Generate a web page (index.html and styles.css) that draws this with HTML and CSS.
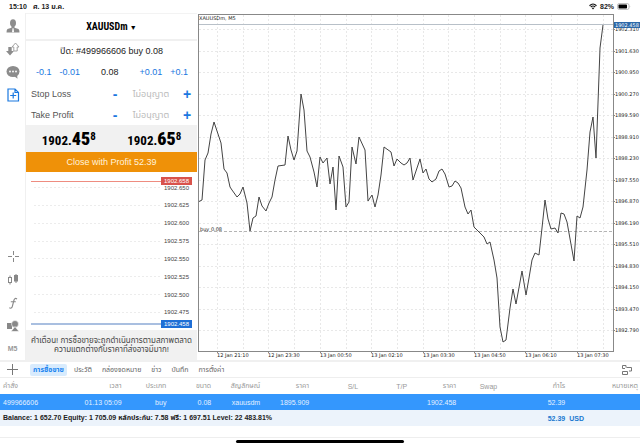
FILE: index.html
```html
<!DOCTYPE html>
<html lang="th">
<head>
  <meta charset="UTF-8" />
  <meta name="viewport" content="width=device-width, initial-scale=1" />
  <title>XAUUSDm, M5</title>
  <link rel="stylesheet" href="styles.css">
</head>
<body>

  <header class="status-bar">
    <span>15:10</span>
    <span>ศ. 13 ม.ค.</span>
    <span class="status-right">
      <svg width="8" height="7" viewBox="0 0 16 13"><path d="M1 5Q8-2 15 5M3.500 7.500Q8 3.500 12.500 7.500" fill="none" stroke="#111" stroke-width="2.200"/><path d="M5.500 9.500Q8 7.500 10.500 9.500L8 12.500z" fill="#111"/></svg>
      82%
      <svg width="14" height="7" viewBox="0 0 28 14"><rect x="1" y="1" width="23" height="12" rx="3.500" fill="none" stroke="#999" stroke-width="1.200"/><rect x="3" y="3" width="17" height="8" rx="1.500"/><path d="M25.500 5v4q2-2 0-4" fill="#999"/></svg>
    </span>
  </header>

  <main class="workspace">
    <nav class="sidebar">
      <div class="tools">
        <button aria-label="Accounts"><svg width="14" height="14" viewBox="0 0 14 14" fill="#8c8c8c"><ellipse cx="7" cy="4" rx="3" ry="3.800"/><path d="M5.500 6.500h3v2.200l4 1.300q1 .5 1 3.500H.5q0-3 1-3.500l4-1.300z"/><path d="M6.500 9.300h1l.5 4H6z" fill="#fff"/></svg></button>
        <button aria-label="Quotes"><svg width="14" height="14" viewBox="0 0 14 14"><path d="M2.300 5h3.400v4H8l-4 4.500L0 9h2.300z" fill="#8c8c8c"/><path d="M9.500 1l3.500 4h-1.800v4H7.800V5H6z" fill="#fff" stroke="#999" stroke-width=".9"/></svg></button>
        <button aria-label="Messages"><svg width="14" height="14" viewBox="0 0 14 14"><ellipse cx="7" cy="6.500" rx="6.500" ry="5.500" fill="#8c8c8c"/><path d="M8 11l3.500 2.800-.5-4z" fill="#8c8c8c"/><g fill="#fff"><circle cx="4" cy="6.500" r=".9"/><circle cx="7" cy="6.500" r=".9"/><circle cx="10" cy="6.500" r=".9"/></g></svg></button>
        <button aria-label="New order"><svg width="14" height="14" viewBox="0 0 14 14" fill="none" stroke="#1a78e0" stroke-width="1.200"><path d="M2 1h7l3.500 3.500V13H2zM9 1v3.500h3.500M7.200 4.500v6M4.200 7.500h6"/></svg></button>
      </div>
      <div class="tools">
        <button aria-label="Crosshair"><svg width="14" height="14" viewBox="0 0 14 14" stroke="#888" stroke-width="1"><path d="M7.500 1v4M7.500 8v4M2 6.500h4M9 6.500h4"/></svg></button>
        <button aria-label="Chart type"><svg width="14" height="14" viewBox="0 0 14 14" stroke="#888" stroke-width="1"><path d="M4 2.500v9M10 1v9"/><rect x="2.500" y="4.500" width="3" height="5" fill="#fff"/><rect x="8.500" y="2.500" width="3" height="5.500" fill="#888"/></svg></button>
        <button aria-label="Indicators"><svg width="14" height="14" viewBox="0 0 14 14" fill="none" stroke="#888" stroke-width="1.100"><path d="M11 3Q8.800 1.300 8 4L6.300 10.500Q5.500 13 3.300 11.800M4.800 5.800h5"/></svg></button>
        <button aria-label="Objects"><svg width="14" height="14" viewBox="0 0 14 14" fill="#888"><path d="M1 4h5v6H1z"/><circle cx="9" cy="5" r="3.500" stroke="#fff" stroke-width=".6"/><path d="M9 7.500L13 12.500H5z" stroke="#fff" stroke-width=".6"/></svg></button>
        <button class="period">M5</button>
      </div>
    </nav>

    <section class="order">
      <button class="symbol">XAUUSDm <small>▼</small></button>
      <p class="order-title">ปิด: #499966606 buy 0.08</p>
      <div class="volume">
        <button>-0.1</button>
        <button>-0.01</button>
        <input type="text" value="0.08" aria-label="Volume" />
        <button>+0.01</button>
        <button>+0.1</button>
      </div>
      <div class="level">
        <label for="sl">Stop Loss</label>
        <button aria-label="Decrease stop loss">-</button>
        <input type="text" id="sl" placeholder="ไม่อนุญาต" />
        <button aria-label="Increase stop loss">+</button>
      </div>
      <div class="level">
        <label for="tp">Take Profit</label>
        <button aria-label="Decrease take profit">-</button>
        <input type="text" id="tp" placeholder="ไม่อนุญาต" />
        <button aria-label="Increase take profit">+</button>
      </div>
      <div class="prices">
        <span class="price">1902.<b>45</b><sup>8</sup></span>
        <span class="price">1902.<b>65</b><sup>8</sup></span>
      </div>
      <button class="close-btn">Close with Profit 52.39</button>
      <svg class="ticks" viewBox="0 0 171 158">
        <path class="tick-grid" d="M8 15.500H135M8 33.500H135M8 51.500H135M8 69.500H135M8 86.500H135M8 104.500H135M8 122.500H135M8 140.500H135"/>
        <g class="tick-labels">
          <text x="163" y="18">1902.650</text>
          <text x="163" y="35">1902.625</text>
          <text x="163" y="53">1902.600</text>
          <text x="163" y="71">1902.575</text>
          <text x="163" y="89">1902.550</text>
          <text x="163" y="107">1902.525</text>
          <text x="163" y="125">1902.500</text>
          <text x="163" y="142">1902.475</text>
        </g>
        <path d="M5 9.500H136" stroke="#ee8c80"/>
        <rect x="135" y="5" width="31" height="8" fill="#d9534c"/>
        <path d="M5 152H136" stroke="#a9bfe0" stroke-width="2"/>
        <rect x="135" y="148" width="31" height="8" fill="#1f6fd6"/>
        <g class="tick-labels badge">
          <text x="163" y="11">1902.658</text>
          <text x="163" y="154">1902.458</text>
        </g>
      </svg>
      <p class="notice">คำเตือน! การซื้อขายจะถูกดำเนินการตามสภาพตลาด<br>ความแตกต่างกับราคาที่ส่งอาจมีมาก!</p>
    </section>

    <section class="chart">
      <svg id="chart" viewBox="198 13 442 347"></svg>
    </section>
  </main>

  <nav class="tabs">
    <button class="add" aria-label="Add"><svg width="11" height="11" viewBox="0 0 11 11" stroke="#777"><path d="M5.500 0v11M0 5.500h11"/></svg></button>
    <button class="tab active">การซื้อขาย</button>
    <button class="tab">ประวัติ</button>
    <button class="tab">กล่องจดหมาย</button>
    <button class="tab">ข่าว</button>
    <button class="tab">บันทึก</button>
    <button class="tab">การตั้งค่า</button>
    <button class="layout" aria-label="Layout"><svg width="12" height="12" viewBox="0 0 12 12" fill="none" stroke="#777"><path d="M5 3.500V1.500H1.500V4.500H4M5.500 3.500h5v3.500H8M1.500 7.500h5v3h-5z"/></svg></button>
  </nav>

  <table class="positions">
    <colgroup>
      <col class="c-order"><col class="c-time"><col class="c-type"><col class="c-size"><col class="c-price"><col class="c-price"><col class="c-price"><col class="c-price"><col class="c-price"><col class="c-swap"><col class="c-profit"><col>
    </colgroup>
    <thead>
      <tr><th>คำสั่ง</th><th>เวลา</th><th>ประเภท</th><th>ขนาด</th><th>สัญลักษณ์</th><th>ราคา</th><th>S/L</th><th>T/P</th><th>ราคา</th><th>Swap</th><th>กำไร</th><th>หมายเหตุ</th></tr>
    </thead>
    <tbody>
      <tr><td>499966606</td><td>01.13 05:09</td><td>buy</td><td>0.08</td><td>xauusdm</td><td>1895.909</td><td></td><td></td><td>1902.458</td><td></td><td>52.39</td><td></td></tr>
    </tbody>
    <tfoot>
      <tr><td colspan="10">Balance: 1 652.70 Equity: 1 705.09 หลักประกัน: 7.58 ฟรี: 1 697.51 Level: 22 483.81%</td><td class="total">52.39</td><td class="total currency">USD</td></tr>
    </tfoot>
  </table>

  <footer class="home"><div class="home-bar"></div></footer>

  <script src="chart.js"></script>
</body>
</html>
```
FILE: styles.css
```css
* {
  box-sizing: border-box;
}
body {
  margin: 0;
  min-height: 100vh;
  display: flex;
  flex-direction: column;
  background: #fff;
  color: #222;
  font-family: "Liberation Sans", Arial, "Noto Sans Thai", sans-serif;
  font-size: 7px;
}
button,
input {
  border: none;
  background: none;
  padding: 0;
  margin: 0;
  font: inherit;
  color: inherit;
}
button {
  cursor: pointer;
}
p {
  margin: 0;
}
svg {
  display: block;
}

.status-bar {
  display: flex;
  gap: 6px;
  height: 13px;
  padding: 0 9px;
  line-height: 13px;
  font-weight: bold;
}
.status-right {
  display: flex;
  align-items: center;
  gap: 3px;
  margin-left: auto;
}

.workspace {
  display: flex;
  align-items: stretch;
}
.sidebar {
  flex: 0 0 26px;
  display: flex;
  flex-direction: column;
  justify-content: space-between;
  padding-top: 1px;
  border-right: 1px solid #f0f0f0;
}
.tools {
  display: flex;
  flex-direction: column;
}
.tools button {
  display: flex;
  align-items: center;
  justify-content: center;
  height: 23px;
}
.tools .period {
  font-weight: bold;
  color: #999;
}

/* order panel */
.order {
  flex: 0 0 28%;
  min-width: 0;
  margin-right: 1px;
  max-width: 171px;
  display: flex;
  flex-direction: column;
  font-size: 9px;
}
.symbol {
  height: 28px;
  border-top: 1px solid #f3f3f3;
  border-bottom: 2px solid #f0f0f0;
  font-family: "Liberation Sans Narrow", "Roboto Condensed", "Liberation Sans", sans-serif;
  font-size: 10px;
  font-weight: bold;
  color: #000;
}
.symbol small {
  font-size: 7px;
}
.order-title {
  line-height: 20px;
  text-align: center;
}
.volume {
  display: flex;
  align-items: center;
  gap: 8px;
  height: 22px;
  padding: 0 9px 0 10px;
}
.volume input {
  flex: 1;
  width: 0;
  min-width: 0;
  text-align: center;
}
.volume button,
.level button {
  color: #1a78e0;
}
.level {
  display: flex;
  align-items: center;
  height: 21px;
  padding: 0 5px;
  color: #555;
}
.level label {
  flex: 1;
}
.level button {
  width: 10px;
  font-size: 14px;
  font-weight: bold;
  line-height: 14px;
}
.level input {
  width: 62px;
  text-align: center;
}
.level input::placeholder {
  color: #bbb;
}
.prices {
  display: flex;
  justify-content: space-around;
  height: 27px;
  background: #f1f1f1;
}
.price {
  font-family: "Liberation Sans Narrow", "Roboto Condensed", "Liberation Sans", sans-serif;
  font-size: 13px;
  font-weight: bold;
  line-height: 27px;
  color: #000;
}
.price b {
  font-size: 18px;
}
.price sup {
  font-size: 11px;
  line-height: 1px;
  vertical-align: 5px;
}
.close-btn {
  height: 20px;
  background: #ef9108;
  color: #fff3dc;
}
.ticks {
  width: 100%;
}
.tick-grid {
  stroke: #ececec;
  stroke-dasharray: 2 2;
}
.tick-labels {
  font-size: 6px;
  text-anchor: end;
  fill: #444;
}
.badge {
  fill: #fff;
}
.notice {
  flex: 1;
  display: flex;
  flex-direction: column;
  justify-content: center;
  background: #f1f1f1;
  font-size: 8px;
  line-height: 9px;
  text-align: center;
  white-space: nowrap;
  color: #444;
}

/* price chart */
.chart {
  flex: 1;
  min-width: 0;
}
.chart svg {
  width: 100%;
}
.grid {
  stroke: #e8e8e8;
  stroke-dasharray: 2 2;
}
.frame {
  fill: none;
  stroke: #888;
}
.series {
  fill: none;
  stroke: #444;
  stroke-width: 1px;
}
.current {
  stroke: #b8c0c8;
}
.entry {
  stroke: #b4b4b4;
  stroke-dasharray: 3 2;
}
.label {
  font-family: "DejaVu Sans", sans-serif;
  font-size: 5px;
  fill: #222;
}
.label-now {
  fill: #fff;
}

.tabs {
  display: flex;
  align-items: center;
  gap: 4px;
  height: 18px;
  padding: 0 7px;
  border-top: 2px solid #f0f0f0;
  border-bottom: 1px solid #eee;
}
.tab {
  height: 12px;
  padding: 0 3px;
  border-radius: 2px;
  color: #666;
}
.tab.active {
  background: #d8ebfd;
  color: #1a84f0;
  font-weight: bold;
}
.add {
  margin-right: 8px;
}
.layout {
  margin-left: auto;
}

/* open positions */
.positions {
  width: 100%;
  table-layout: fixed;
  border-collapse: collapse;
}
.c-order { width: 12%; }
.c-time { width: 7%; }
.c-type { width: 7%; }
.c-size { width: 7%; }
.c-price { width: 49px; }
.c-swap { width: 41px; }
.c-profit { width: 68px; }
.positions th,
.positions td {
  height: 16px;
  padding: 0;
  text-align: right;
  font-weight: normal;
  white-space: nowrap;
}
.positions th:first-child,
.positions td:first-child {
  padding-left: 3px;
  text-align: left;
}
.positions th:last-child {
  padding-right: 2px;
}
.positions th {
  color: #999;
}
.positions tbody {
  background: #3497fd;
  color: #e4f1ff;
}
.positions tfoot {
  background: #ecf3fb;
}
.positions tfoot td {
  font-weight: bold;
}
.positions .total {
  color: #1a78d0;
}
.positions .currency {
  padding-left: 4px;
  text-align: left;
}

.home {
  margin-top: auto;
  padding: 2px 0 4px;
  border-top: 1px solid #eee;
}
.home-bar {
  width: 168px;
  height: 3px;
  margin: 0 auto;
  border-radius: 2px;
  background: #000;
}
```
FILE: chart.js
```js
const chart = document.getElementById('chart');

const prices = ['1902.310', '1901.630', '1900.950', '1900.270', '1899.590', '1898.910', '1898.230',
  '1897.550', '1896.870', '1896.190', '1895.510', '1894.830', '1894.150', '1893.470', '1892.790'];
const times = ['12 Jan 21:10', '12 Jan 23:30', '13 Jan 00:50', '13 Jan 02:10', '13 Jan 03:30',
  '13 Jan 04:50', '13 Jan 06:10', '13 Jan 07:30'];

// Line chart points, x,y
const points = `198,202 202,200 205,160 208,153 211,134 214,122 221,143 224,169 227,173 230,187 232,190
  237,197 240,194 243,187 247,203 250,231 253,218 256,216 259,197 262,206 266,211 269,203 272,197
  275,180 278,166 285,165 288,136 291,150 294,160 297,151 301,94 304,110 307,151 310,157 314,172
  317,187 320,157 323,163 327,158 330,184 333,167 336,210 339,156 343,167 346,207 349,202 352,147
  356,164 359,137 365,150 368,201 372,195 375,207 378,195 381,175 384,147 391,152 394,166 397,159
  401,163 404,165 407,163 410,158 413,180 420,159 423,173 426,169 429,179 432,182 436,179 439,171
  442,169 445,174 449,187 452,186 455,181 458,183 461,188 465,207 468,214 471,210 474,227 478,231
  484,237 487,244 490,242 494,260 497,278 500,327 503,342 506,340 510,308 513,289 516,304 522,271
  526,295 529,278 532,260 535,253 539,255 542,228 545,200 548,219 551,229 555,228 558,233 561,213
  564,214 567,222 574,261 577,216 580,218 583,207 587,170 590,132 593,117 596,158 600,48 603,25`;

let html = '';

// Grid and price scale
prices.forEach((price, i) => {
  const y = Math.round(29 + i * 21.5);
  html += `<path class="grid" d="M199 ${y + 0.5}H613"/>
    <path class="frame" d="M613 ${y + 0.5}h2"/>
    <text class="label" x="615" y="${y + 2}">${price}</text>`;
});
for (let i = 0; i < 16; i++) {
  const x = Math.round(217 + i * 25.7) + 0.5;
  html += `<path class="grid" d="M${x} 15V351"/>`;
}
times.forEach((time, i) => {
  const x = Math.round(217 + i * 51.4);
  html += `<path class="frame" d="M${x + 0.5} 351v2"/>
    <text class="label" x="${x}" y="357">${time}</text>`;
});

html += `
  <path class="current" d="M199 24.5H613"/>
  <path class="entry" d="M199 231.5H613"/>
  <polyline class="series" points="${points}"/>
  <rect class="frame" x="198.5" y="14.5" width="415" height="337"/>
  <rect x="614" y="22" width="26" height="6" fill="#2c68a8"/>
  <text class="label label-now" x="615" y="27">1902.458</text>
  <text class="label" x="199" y="20">XAUUSDm, M5</text>
  <text class="label" x="200" y="231">buy 0.08</text>`;

chart.innerHTML = html;
```
